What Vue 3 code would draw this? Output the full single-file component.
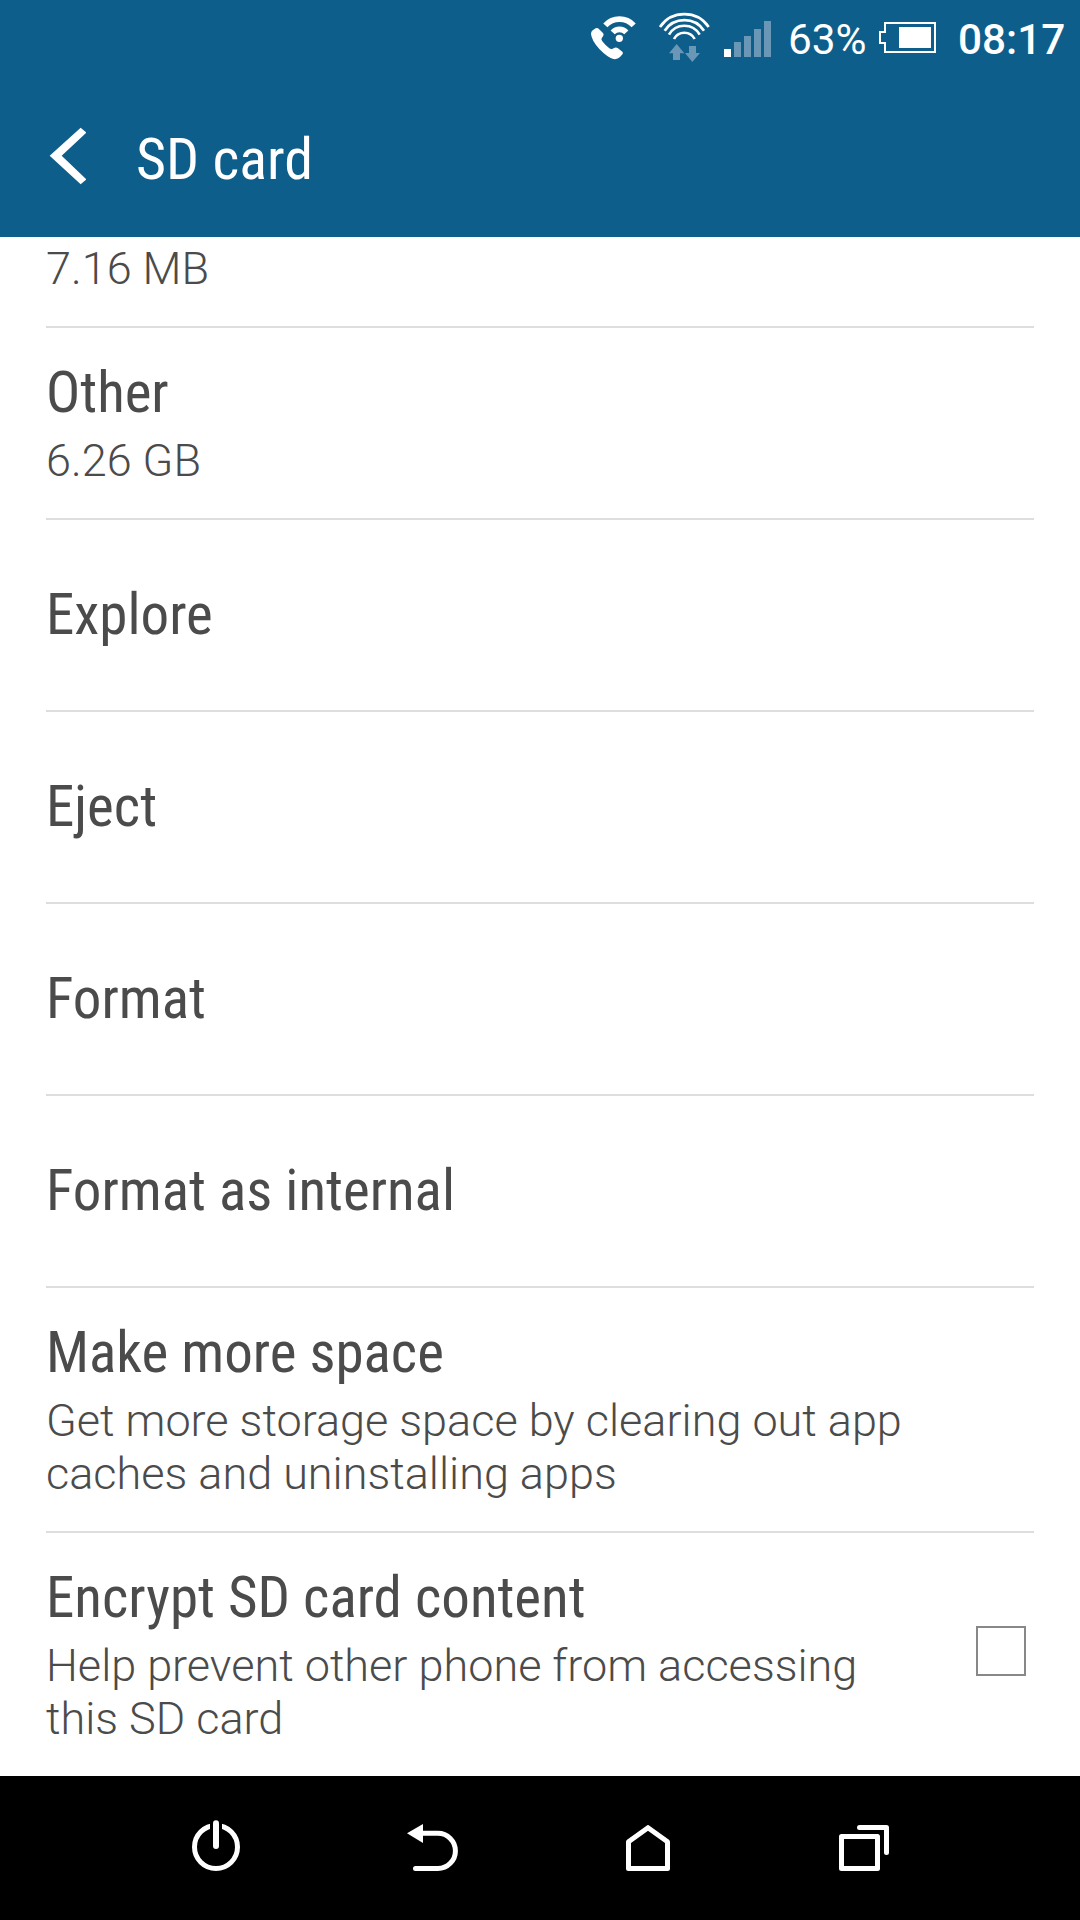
<script setup>
import { ref } from 'vue';

const encrypted = ref(false);

const items = [
  { id: 'misc', summary: ['7.16 MB'], cut: true },
  { id: 'other', title: 'Other', summary: ['6.26 GB'] },
  { id: 'explore', title: 'Explore' },
  { id: 'eject', title: 'Eject' },
  { id: 'format', title: 'Format' },
  { id: 'internal', title: 'Format as internal' },
  {
    id: 'space',
    title: 'Make more space',
    summary: ['Get more storage space by clearing out app', 'caches and uninstalling apps']
  },
  {
    id: 'encrypt',
    title: 'Encrypt SD card content',
    summary: ['Help prevent other phone from accessing', 'this SD card'],
    checkbox: true
  }
];
</script>

<template>
  <div class="screen">
    <header>
      <div class="status-bar">
        <svg class="call" viewBox="60 0 144 225">
          <path class="white" d="M63 102 Q63 95 68 91 L77 85 Q82 82 86 86 L99 99 Q102 103 100 107 L95 115 Q93 119 97 124 Q106 136 118 145 Q123 149 128 146 L134 143 Q139 141 143 144 L157 155 Q160 158 158 162 L150 171 Q142 179 130 177 Q112 172 88 147 Q65 122 63 102Z" />
          <circle class="white" cx="148" cy="115" r="11" />
          <path class="arc thick" d="M106 76 A58 58 0 0 1 191 76" />
          <path class="arc thick" d="M128 97 A28 28 0 0 1 169 97" />
        </svg>
        <svg class="wifi" viewBox="264 0 159 225">
          <path class="arc" d="M270 81 A88.500 88.500 0 0 1 416 81" />
          <path class="arc" d="M284 92 A71 71 0 0 1 402 92" />
          <path class="arc" d="M297 104 A53 53 0 0 1 389 104" />
          <path class="arc" d="M312 117 A35 35 0 0 1 374 117" />
          <path class="dim" d="M320 132 L343 160 H330 V180 H309 V160 H297Z" />
          <path class="dim" d="M357 138 H378 V159 H390 L367 186 L345 159 H357Z" />
        </svg>
        <svg class="signal" viewBox="0 0 47 75">
          <rect class="white" x="0" y="49" width="7" height="8" />
          <rect class="dim" x="10" y="42" width="7" height="15" />
          <rect class="dim" x="20" y="36" width="7" height="21" />
          <rect class="dim" x="30" y="29" width="7" height="28" />
          <rect class="dim" x="40" y="21" width="7" height="36" />
        </svg>
        <span class="percent">63%</span>
        <svg class="battery" viewBox="0 0 57 75">
          <path class="outline" d="M6 23 H56 V52 H6 V43 H1 V32 H6Z" />
          <rect class="white" x="20" y="27" width="32" height="21" />
        </svg>
        <span class="clock">08:17</span>
      </div>
      <div class="action-bar">
        <svg class="back" viewBox="138 -75 120 486">
          <path class="white" d="M242 83 L259 98 L185 167 L259 238 L242 253 L149 167Z" />
        </svg>
        <h1>SD card</h1>
      </div>
    </header>

    <main>
      <div v-for="item in items" :key="item.id" class="item" :class="{ cut: item.cut, single: !item.summary }">
        <div class="text">
          <h2 v-if="item.title">{{ item.title }}</h2>
          <p v-if="item.summary">
            <span v-for="line in item.summary" :key="line">{{ line }}</span>
          </p>
        </div>
        <div v-if="item.checkbox" class="checkbox" :class="{ checked: encrypted }" @click="encrypted = !encrypted"></div>
      </div>
    </main>

    <nav>
      <svg viewBox="90 126 216 216">
        <circle class="stroke" cx="198" cy="231" r="64.500" />
        <rect x="180" y="150" width="36" height="50" />
        <path class="stroke bar" d="M198 160 V228" />
      </svg>
      <svg viewBox="738 126 216 216">
        <path class="white" d="M771 190 L819 162 V219Z" />
        <path class="stroke" d="M815 190 H863.500 A52.750 52.750 0 0 1 863.500 295.500 H796.500" />
      </svg>
      <svg viewBox="96 126 216 216">
        <path class="stroke" d="M145.500 295.500 V215 L204 173 L262.500 215 V295.500Z" />
      </svg>
      <svg viewBox="744 126 216 216">
        <path class="stroke" d="M784.500 199.500 H892.500 V295.500 H784.500Z" />
        <path class="stroke" d="M838.500 172.500 H919.500 V247.500" />
      </svg>
    </nav>
  </div>
</template>

<style>
body {
  margin: 0;
  background: #fff;
}
</style>

<style scoped>
.screen {
  display: flex;
  flex-direction: column;
  width: 1080px;
  height: 1920px;
  overflow: hidden;
  background: #fff;
  color: #4b4b4b;
  font-family: Roboto, sans-serif;
}

header {
  height: 237px;
  background: #0e5e8b;
  color: #fff;
}

svg {
  display: block;
  flex: none;
}

.white {
  fill: #fff;
}

.dim {
  fill: #6997b5;
}

.arc {
  fill: none;
  stroke: #fff;
  stroke-width: 8;
}

.arc.thick {
  stroke-width: 17;
}

.outline {
  fill: none;
  stroke: #fff;
  stroke-width: 2;
}

.status-bar {
  display: flex;
  height: 75px;
  padding-left: 590px;
  font-size: 42.3px;
  line-height: 80px;
  white-space: nowrap;
}

.status-bar svg {
  height: 75px;
}

.call {
  width: 48px;
}

.wifi {
  width: 53px;
  margin-left: 20px;
}

.signal {
  width: 47px;
  margin-left: 13px;
}

.percent {
  width: 91px;
  margin-left: 17px;
}

.battery {
  width: 57px;
}

.clock {
  margin-left: 22px;
  font-weight: 500;
}

.action-bar {
  display: flex;
  height: 162px;
  padding-left: 46px;
}

.back {
  width: 40px;
  height: 162px;
}

h1,
h2 {
  margin: 0;
  font-family: "Roboto Condensed", Roboto, sans-serif;
  font-stretch: 75%;
  font-weight: 400;
  white-space: nowrap;
}

h1 {
  margin-left: 50px;
  padding-top: 6px;
  font-size: 58px;
  line-height: 156px;
}

main {
  flex: 1;
  padding: 0 46px;
  overflow: hidden;
}

.item {
  display: flex;
  align-items: center;
  box-sizing: border-box;
  min-height: 192px;
  padding: 31px 0;
  border-bottom: 2px solid #dedede;
}

.item.single {
  padding: 30px 0 32px;
}

/* first row is scrolled halfway under the header */
.item.cut {
  min-height: 0;
  height: 91px;
  padding: 5px 0 31px;
}

.item:last-child {
  border-bottom: none;
}

.text {
  flex: 1;
}

h2 {
  font-size: 57px;
  line-height: 67px;
}

p {
  margin: 0;
  font-size: 45px;
  font-weight: 300;
  line-height: 53px;
  white-space: nowrap;
}

h2 + p {
  margin-top: 8px;
}

p span {
  display: block;
}

.checkbox {
  box-sizing: border-box;
  width: 50px;
  height: 50px;
  margin: 0 8px 7px 0;
  border: 2px solid #888;
}

.checkbox.checked {
  background: #0e5e8b;
}

nav {
  display: flex;
  justify-content: space-around;
  align-items: center;
  height: 144px;
  padding: 0 108px;
  background: #000;
}

nav svg {
  width: 72px;
  height: 72px;
}

.stroke {
  fill: none;
  stroke: #fff;
  stroke-width: 15;
  stroke-linecap: round;
  stroke-linejoin: round;
}

.stroke.bar {
  stroke-width: 18;
}
</style>
